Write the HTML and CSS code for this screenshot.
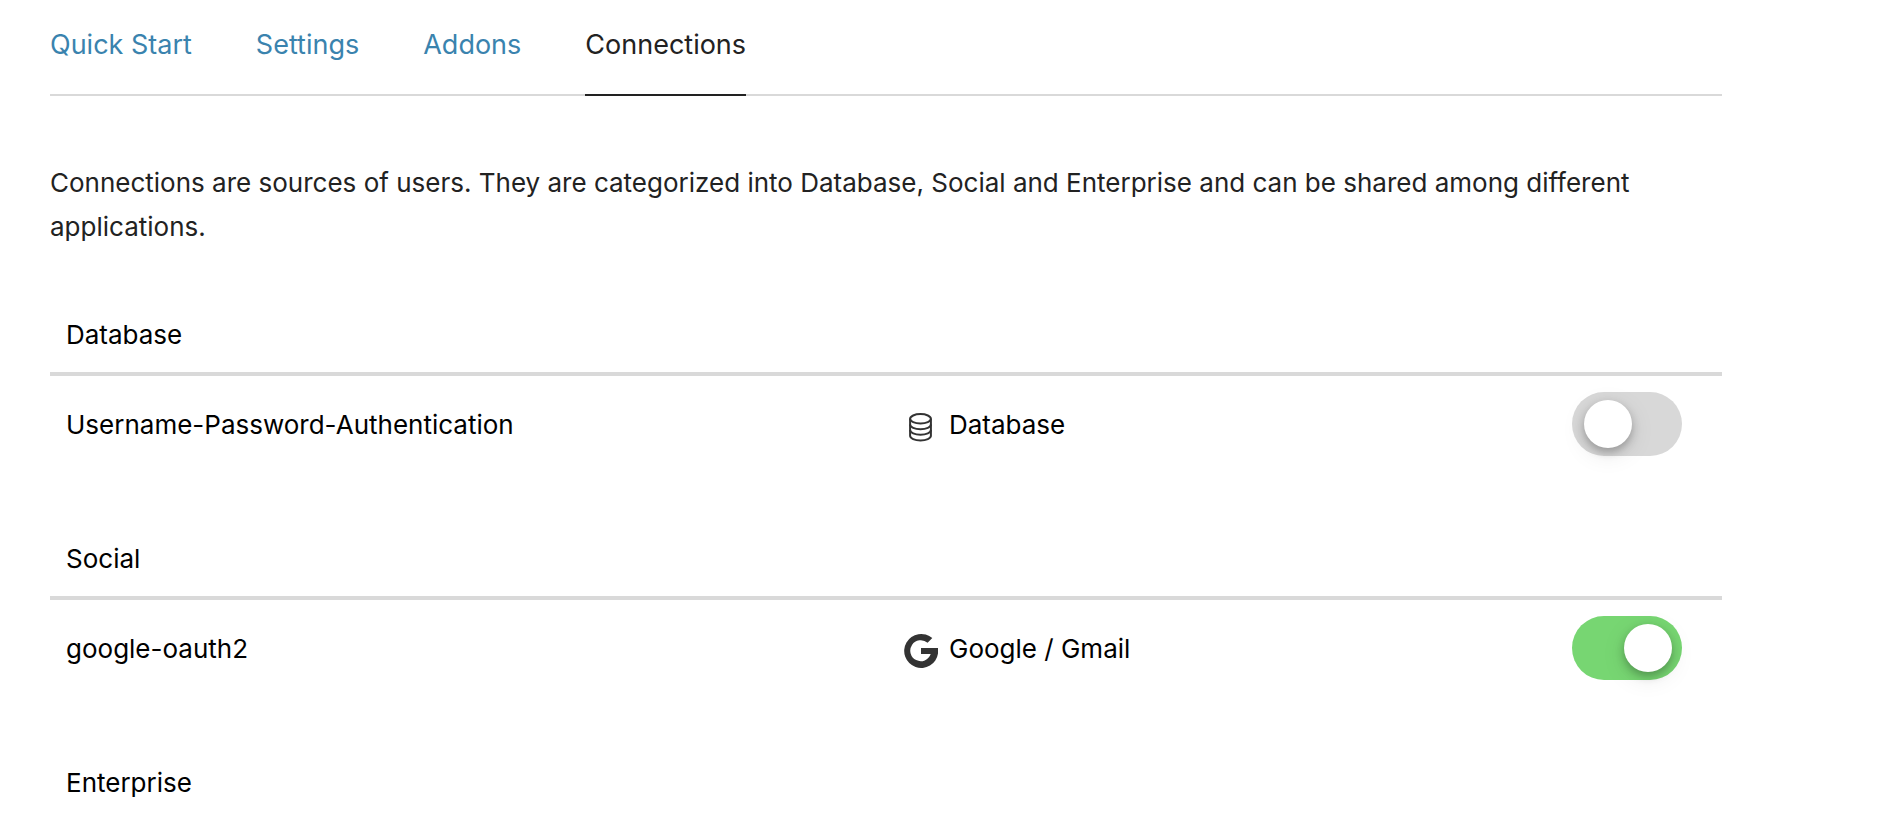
FILE: index.html
```html
<!DOCTYPE html>
<html lang="en">
<head>
<meta charset="utf-8">
<title>Connections</title>
<link rel="stylesheet" href="styles.css">
</head>
<body>
<main class="page">
  <nav class="tabs">
    <a class="tab" href="#quick-start">Quick Start</a>
    <a class="tab" href="#settings">Settings</a>
    <a class="tab" href="#addons">Addons</a>
    <a class="tab tab-active" href="#connections" aria-current="page">Connections</a>
  </nav>
  <p class="intro">Connections are sources of users. They are categorized into Database, Social and Enterprise and can be shared among different applications.</p>

  <table class="connections">
    <colgroup><col class="col-name"><col class="col-type"><col></colgroup>
    <thead><tr><th colspan="3">Database</th></tr></thead>
    <tbody>
      <tr>
        <td><label for="toggle-database">Username-Password-Authentication</label></td>
        <td>
          <div class="type-label">
            <svg class="icon" viewBox="0 0 36 36" fill="none" stroke="#333" stroke-width="2" aria-hidden="true">
              <ellipse cx="18.5" cy="10.8" rx="10.4" ry="4.7"/>
              <path d="M8.1 10.8v17c0 2.6 4.6 4.7 10.4 4.7s10.4-2.1 10.4-4.7v-17"/>
              <path d="M8.1 16.5c0 2.6 4.6 4.7 10.4 4.7s10.4-2.1 10.4-4.7M8.1 22.1c0 2.6 4.6 4.7 10.4 4.7s10.4-2.1 10.4-4.7"/>
            </svg>
            <span>Database</span>
          </div>
        </td>
        <td class="switch-cell"><input class="switch" type="checkbox" role="switch" id="toggle-database"></td>
      </tr>
    </tbody>
  </table>

  <table class="connections">
    <colgroup><col class="col-name"><col class="col-type"><col></colgroup>
    <thead><tr><th colspan="3">Social</th></tr></thead>
    <tbody>
      <tr>
        <td><label for="toggle-google">google-oauth2</label></td>
        <td>
          <div class="type-label">
            <svg class="icon" viewBox="0 0 36 36" aria-hidden="true">
              <path fill="#333" d="M30.3 6.1A17 17 0 1 0 36 21.5V16H19v6.1h9.7A10.5 10.5 0 1 1 25.6 10.7Z"/>
            </svg>
            <span>Google / Gmail</span>
          </div>
        </td>
        <td class="switch-cell"><input class="switch" type="checkbox" role="switch" id="toggle-google" checked></td>
      </tr>
    </tbody>
  </table>

  <table class="connections">
    <thead><tr><th colspan="3">Enterprise</th></tr></thead>
  </table>
</main>
</body>
</html>
```
FILE: styles.css
```css
* {
  box-sizing: border-box;
}

body {
  margin: 0;
  background: #fff;
  color: #000;
  font-family: Inter, "Liberation Sans", sans-serif;
  font-size: 26px;
  line-height: 44px;
}

.page {
  padding: 23px 178px 0 50px;
}

.tabs {
  display: flex;
  gap: 64px;
  border-bottom: 2px solid #d9d9d9;
  font-size: 27px;
}

.tab {
  margin-bottom: -2px;
  padding-bottom: 27px;
  border-bottom: 2px solid transparent;
  color: #3a83ae;
  text-decoration: none;
}

.tab-active {
  border-bottom-color: #222;
  color: #222;
}

.intro {
  margin: 65px 0 47px;
  color: #222;
}

.connections {
  width: 100%;
  margin-bottom: 48px;
  border-spacing: 0;
  table-layout: fixed;
}

.connections:last-child {
  margin-bottom: 0;
}

.connections th {
  padding: 17px 16px 15px;
  border-bottom: 4px solid #d9d9d9;
  font-weight: 400;
  text-align: left;
}

.connections td {
  height: 96px;
  padding: 2px 16px 0;
  vertical-align: middle;
}

.col-name {
  width: 50%;
}

.col-type {
  width: 30%;
}

.type-label {
  display: flex;
  align-items: center;
  gap: 11px;
}

.icon {
  width: 36px;
  height: 36px;
  margin-top: 2px;
}

.connections .switch-cell {
  padding: 0 40px 0 0;
}

.switch {
  appearance: none;
  display: block;
  width: 110px;
  height: 64px;
  margin: 0 0 0 auto;
  padding: 8px 12px;
  border-radius: 32px;
  background: #d8d8d8;
  cursor: pointer;
}

.switch::before {
  content: "";
  display: block;
  width: 48px;
  height: 48px;
  border-radius: 50%;
  background: #fff;
  box-shadow: 0 4px 8px rgba(0, 0, 0, 0.25), 0 6px 24px rgba(0, 0, 0, 0.1);
}

.switch:checked {
  padding: 8px 10px;
  background: #77d672;
}

.switch:checked::before {
  margin-left: auto;
}
```
